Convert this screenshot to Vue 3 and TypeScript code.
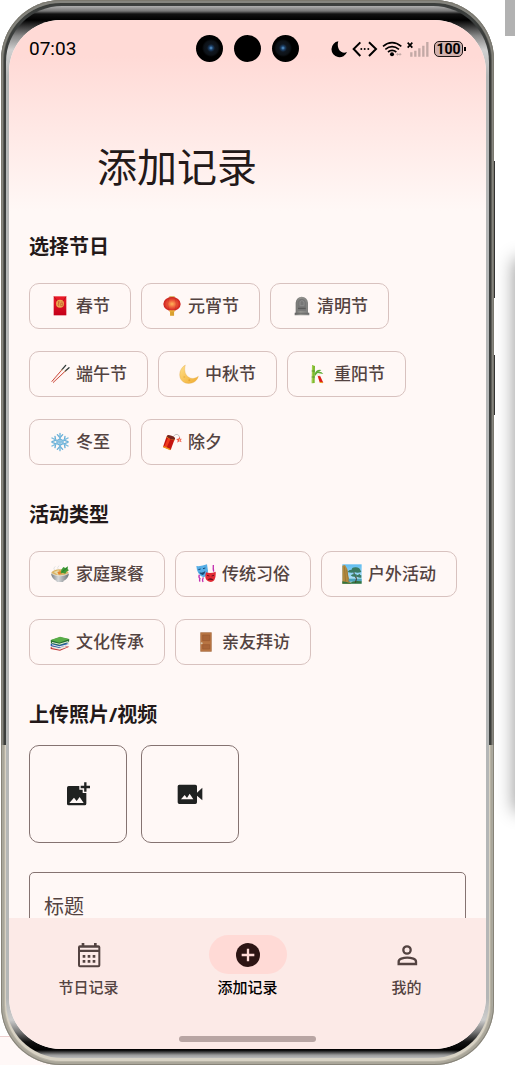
<script setup lang="ts">
import { ref } from 'vue'

interface Option {
  label: string
  icon: string
}

interface Tab {
  label: string
  icon: 'calendar' | 'add' | 'person'
}

const festivals: Option[] = [
  { label: '春节', icon: 'envelope' },
  { label: '元宵节', icon: 'lantern' },
  { label: '清明节', icon: 'stone' },
  { label: '端午节', icon: 'chopsticks' },
  { label: '中秋节', icon: 'crescent' },
  { label: '重阳节', icon: 'bamboo' },
  { label: '冬至', icon: 'snow' },
  { label: '除夕', icon: 'cracker' },
]

const activities: Option[] = [
  { label: '家庭聚餐', icon: 'bowl' },
  { label: '传统习俗', icon: 'masks' },
  { label: '户外活动', icon: 'park' },
  { label: '文化传承', icon: 'books' },
  { label: '亲友拜访', icon: 'door' },
]

const tabs: Tab[] = [
  { label: '节日记录', icon: 'calendar' },
  { label: '添加记录', icon: 'add' },
  { label: '我的', icon: 'person' },
]

const festival = ref('')
const activity = ref('')
const title = ref('')
const current = ref<Tab['icon']>('add')
</script>

<template>
  <div class="stage">
    <svg class="defs" aria-hidden="true">
      <defs>
        <radialGradient id="g-lantern"><stop offset="0" stop-color="#ffb458" /><stop offset=".5" stop-color="#ee5a3a" /><stop offset="1" stop-color="#cc1c1c" /></radialGradient>
        <linearGradient id="g-red" x2="0" y2="1"><stop offset="0" stop-color="#ec1c28" /><stop offset="1" stop-color="#c4001a" /></linearGradient>
        <linearGradient id="g-moon" x2="1" y2="1"><stop offset="0" stop-color="#ffe08a" /><stop offset="1" stop-color="#f0ab2e" /></linearGradient>
        <linearGradient id="g-stone" x2="1"><stop offset="0" stop-color="#6d6d6d" /><stop offset=".4" stop-color="#94948f" /><stop offset="1" stop-color="#7c7c7c" /></linearGradient>
        <linearGradient id="g-bowl" x2="1"><stop offset="0" stop-color="#777c80" /><stop offset=".4" stop-color="#d5d8da" /><stop offset="1" stop-color="#6e7376" /></linearGradient>
        <linearGradient id="g-sky" x2="0" y2="1"><stop offset="0" stop-color="#5fbcf0" /><stop offset="1" stop-color="#c8ecf8" /></linearGradient>
      </defs>
      <symbol id="envelope" viewBox="0 0 60 60">
        <path fill="url(#g-red)" d="M11 1h38v57H11z" />
        <path fill="none" stroke="#a80a16" stroke-width="2" d="M12 2l10 14q8 10 17 0L48 2" />
        <circle cx="30" cy="23" r="12" fill="#e8a94e" />
        <path fill="none" stroke="#c4542c" stroke-width="2" d="M24 18h5M26 16v14M32 18h6M32 22h6v7h-6zM23 25l3-3" />
      </symbol>
      <symbol id="lantern" viewBox="0 0 60 60">
        <path fill="#c89a34" d="M22 1h16v7H22z" />
        <ellipse cx="30" cy="24" rx="26" ry="21" fill="url(#g-lantern)" />
        <path fill="none" stroke="#b82a20" stroke-width="1" d="M21 5q-8 19 0 38M39 5q8 19 0 38" />
        <path fill="#e9b13a" d="M22 43h16v4h-2v12H24V47h-2z" />
        <path stroke="#a97219" d="M27 47v12M31 47v12M35 47v12" />
      </symbol>
      <symbol id="stone" viewBox="0 0 60 60">
        <path fill="url(#g-stone)" d="M14 50V20q2-17 18-18 17 1 19 18v30h4v8H11v-8z" />
        <path fill="#767676" d="M20 18q3-10 13-10 10 1 12 12v24H20z" />
        <path fill="none" stroke="#8c8c8c" stroke-width="3" d="M27 17q5-7 12 0v12H27z" />
        <path stroke="#555" stroke-width="3" d="M21 37h23" /><path stroke="#5d5d5d" stroke-width="2" d="M12 52h42" />
      </symbol>
      <symbol id="chopsticks" viewBox="0 0 60 60">
        <path stroke="#c94538" stroke-width="3" d="M5 53L36 17M9 56L46 21" />
        <path stroke="#eda89c" stroke-width="1" d="M7 53L37 18M10 57L47 22" />
        <path stroke="#333c3a" stroke-width="4" stroke-linecap="round" d="M36 17L47 4M46 21L57 11" />
        <path stroke="#d8a36a" stroke-width="3" d="M34 20l3-4M43 24l4-4" />
      </symbol>
      <symbol id="crescent" viewBox="0 0 60 60">
        <path fill="url(#g-moon)" stroke="#dda442" stroke-width="1" d="M19 3C-3 15-4 49 19 57c15 4 34-1 39-20C47 46 31 46 22 33 16 24 16 11 19 3z" />
        <circle cx="16" cy="39" r="3" fill="#edb64b" /><circle cx="31" cy="49" r="3" fill="#e6a534" />
      </symbol>
      <symbol id="bamboo" viewBox="0 0 60 60">
        <path fill="#79b82c" d="M12 3l9 3-1 51-9 1z" />
        <path stroke="#c3dc62" stroke-width="2" d="M14 5v51" /><path stroke="#408226" stroke-width="2" d="M11 21h10M11 39h10" />
        <path fill="#5eae35" d="M20 29q5-14 20-11-4 5-11 6 11-3 17 6-9-1-17-3l-8 9z" />
        <path fill="#dc1d16" d="M28 32l8 3 10 21-11-1z" /><path fill="#f5eee0" d="M27 29l9 3-1 5-9-2z" />
        <path stroke="#e8a81e" stroke-width="3" d="M35 55l9 1" />
      </symbol>
      <symbol id="snow" viewBox="0 0 60 60">
        <g fill="none" stroke="#67afd7" stroke-width="4" stroke-linecap="round">
          <path d="M30 4v52M6 18l48 24M54 18L6 42" />
          <path d="M22 8l8 9 8-9M22 52l8-9 8 9M6 29l11-4-2-12M54 31l-11 4 2 12M45 13l-2 12 11 4M15 47l2-12-11-4" />
          <path d="M30 21l9 5v9l-9 5-9-5v-9z" />
        </g>
        <path stroke="#b2ddf2" stroke-width="1" d="M30 4v52M6 18l48 24M54 18L6 42" />
      </symbol>
      <symbol id="cracker" viewBox="0 0 60 60">
        <path fill="none" stroke="#a8a4a1" stroke-width="2" d="M32 16Q42 2 50 10q4 4 3 12" />
        <path fill="#c51410" d="M14 13l24 9-12 32L3 45z" />
        <path fill="#ef3b1c" d="M19 15l8 3L13 49l-7-3z" />
        <path fill="none" stroke="#ef9a1b" stroke-width="4" d="M4 44l21 9M14 15l24 9" />
        <ellipse cx="27" cy="16" rx="13" ry="5" fill="#75231b" transform="rotate(22 27 16)" />
        <path fill="#f15545" d="M53 15l2 6 5-1-4 5 3 6-7-3-6 4 1-7-5-4 7-1z" /><circle cx="53" cy="24" r="2" fill="#fff0b0" />
      </symbol>
      <symbol id="bowl" viewBox="0 0 60 60">
        <path fill="none" stroke="#e2e4e3" stroke-width="3" d="M14 19q-6-7 2-12M25 17q-5-6 2-12" />
        <ellipse cx="30" cy="27" rx="26" ry="11" fill="#dab366" />
        <path fill="#e6dcae" d="M11 24l14-5 9 8-10 6z" /><path fill="#e7822b" d="M22 24l10-3 4 7-10 4z" />
        <path fill="#3f9a35" d="M34 17l6-8 6 3 8-5-1 8 4 4-8 4-3 6-7-2-7 1z" /><path stroke="#1e6827" stroke-width="2" d="M37 23l14-11" />
        <path fill="url(#g-bowl)" d="M3 28q27 15 54 0-2 17-17 23v3H20v-3Q5 45 3 28z" />
        <path fill="none" stroke="#eceeef" stroke-width="2" d="M3 28q27 15 54 0" />
      </symbol>
      <symbol id="masks" viewBox="0 0 60 60">
        <path fill="none" stroke="#c22fb0" stroke-width="4" d="M10 32q-3 8 2 12-3 4 0 9M52 3q-1 11 1 20M22 40q-4 7-1 14" />
        <path fill="#57aee6" d="M1 6q15 2 32-5l3 20q0 13-13 19Q3 34 1 6z" />
        <path stroke="#174a75" stroke-width="3" fill="none" d="M7 17l7-2M21 14l7-2" />
        <path fill="#174a75" d="M10 25q9 3 18-4-2 11-8 12-7 0-10-8z" />
        <path fill="#e22a35" d="M30 25q14 5 29-2 2 28-14 31-15-1-17-14 0-8 2-15z" />
        <path stroke="#6b1020" stroke-width="3" fill="none" d="M33 34l7 2M47 36l7-2" />
        <path fill="#6b1020" d="M34 48q7-9 17-2l1 3q-9-3-18-1z" />
      </symbol>
      <symbol id="park" viewBox="0 0 60 60">
        <path fill="url(#g-sky)" d="M1 1h58v58H1z" />
        <path fill="#b58a3e" d="M1 5l8-2 7 12 3 23 8 21H1z" /><path stroke="#9a7836" stroke-width="3" d="M7 8l4 45M14 17l6 37" />
        <path fill="#4da3bb" d="M20 44h39v9H20z" />
        <path fill="#347440" d="M24 57q10-9 35-5v7H1v-7q14 2 23 5z" />
        <path fill="none" stroke="#473b29" stroke-width="3" d="M40 56q8-12-2-22-5-6 1-18M42 40l11-9" />
        <path fill="#3a7a62" d="M17 24q4-8 12-7 1-8 13-7 10 0 13 8l3 6q-13 4-20 0-8 5-21 0zM26 34q11-7 19-2l-3 6q-10 2-16-4zM42 36q8-7 16-2v7q-9 2-16-5z" />
      </symbol>
      <symbol id="books" viewBox="0 0 60 60">
        <path fill="#bf3033" d="M2 45l30-7 26 6-28 12L2 51z" /><path fill="#eee7df" d="M5 45l27-5 22 4-25 9L5 48z" />
        <path fill="#245ca5" d="M2 35l29-8 26 9-29 12L2 42z" /><path fill="#eeeeea" d="M6 37l22 6 28-7v3l-27 7-23-6z" />
        <path fill="#256f2d" d="M2 25l28-9 28 6-1 8-29 10L3 34z" /><path fill="#e5eee4" d="M6 30l22 5 27-8v3l-26 8-23-5z" />
        <path fill="#59ad48" d="M2 24l28-10 28 7-30 11z" />
      </symbol>
      <symbol id="door" viewBox="0 0 60 60">
        <path fill="#a26335" d="M13 1h34v58H13z" /><path fill="#b87543" d="M15 3h30v54H15z" />
        <path fill="#a96538" stroke="#9a5b31" stroke-width="2" d="M20 9h21v17H20zM20 38h21v13H20z" />
        <circle cx="17" cy="34" r="3" fill="#d9c8ad" />
      </symbol>
    </svg>

    <div class="backdrop-block"></div>
    <div class="backdrop-shade"></div>
    <div class="backdrop-card"></div>

    <div class="phone">
      <i class="key key-volume"></i>
      <i class="key key-power"></i>
      <div class="bezel">
        <div class="screen">
          <header class="top">
            <div class="status">
              <time>07:03</time>
              <div class="cameras">
                <i class="lens glass"></i><i class="lens"></i><i class="lens glass glass-right"></i>
              </div>
              <div class="indicators">
                <svg class="signals" viewBox="225 118 306 54" aria-hidden="true">
                  <path d="M250 122a24 24 0 1 0 26 32c-17 9-33-10-26-32z" />
                  <path fill="none" stroke="#000" stroke-width="6" d="M316 125l-20 20 20 21M342 125l21 20-21 21" />
                  <circle cx="319" cy="145" r="3" /><circle cx="329" cy="145" r="3" /><circle cx="340" cy="145" r="3" />
                  <path fill="none" stroke="#000" stroke-width="5" d="M384 137q27-22 55 0M391 146q20-16 41 0M399 154q12-10 25 0" />
                  <circle cx="411" cy="161" r="6" />
                  <path fill="#c3a9a6" d="M423 161l6-5v3h5v-3l6 5-6 5v-3h-5v3z" />
                  <path fill="none" stroke="#000" stroke-width="5" d="M458 126l14 15M472 126l-14 15" />
                  <path stroke="#c3a9a6" stroke-width="7" d="M469 155v13M481 150v18M493 143v25M505 135v33M517 124v44" />
                </svg>
                <span class="battery">100</span>
              </div>
            </div>
            <h1>添加记录</h1>
          </header>

          <main>
            <section>
              <h2>选择节日</h2>
              <div class="chips">
                <button v-for="item in festivals" :key="item.label" type="button" class="chip" :aria-pressed="festival === item.label" @click="festival = item.label">
                  <svg class="emoji" aria-hidden="true"><use :href="'#' + item.icon" /></svg>
                  {{ item.label }}
                </button>
              </div>
            </section>

            <section>
              <h2>活动类型</h2>
              <div class="chips">
                <button v-for="item in activities" :key="item.label" type="button" class="chip" :aria-pressed="activity === item.label" @click="activity = item.label">
                  <svg class="emoji" aria-hidden="true"><use :href="'#' + item.icon" /></svg>
                  {{ item.label }}
                </button>
              </div>
            </section>

            <section class="uploads">
              <h2>上传照片/视频</h2>
              <div class="tiles">
                <button type="button" class="tile" aria-label="添加照片">
                  <svg class="glyph" viewBox="190 269 84 84" aria-hidden="true">
                    <path fill="#202221" fill-rule="evenodd" d="M204 287h32v11h10v10h11v32q0 5-5 5h-48q-5 0-5-5v-48q0-5 5-5zM206 338h43l-12-18-9 12-8-10z" />
                    <path stroke="#202221" stroke-width="7" d="M240 290h28M254 276v28" />
                  </svg>
                </button>
                <button type="button" class="tile" aria-label="添加视频">
                  <svg class="glyph" viewBox="527 269 84 84" aria-hidden="true">
                    <path fill="#202221" fill-rule="evenodd" d="M537 283h48q5 0 5 5v19l16-15v38l-16-14v20q0 5-5 5h-48q-5 0-5-5v-48q0-5 5-5zM542 327h37l-11-17-8 13-7-9z" />
                  </svg>
                </button>
              </div>
            </section>

            <label class="field">
              <input v-model="title" type="text" placeholder="标题" aria-label="标题" />
            </label>
          </main>

          <nav>
            <div class="tabs">
              <button v-for="tab in tabs" :key="tab.icon" type="button" class="tab" :class="{ active: current === tab.icon }" @click="current = tab.icon">
                <span class="pill">
                  <svg v-if="tab.icon === 'calendar'" class="glyph" viewBox="223 105 84 84" aria-hidden="true">
                    <path fill="currentColor" fill-rule="evenodd" d="M243 111h8v7h29v-7h8v7h5q6 0 6 6v54q0 6-6 6h-55q-6 0-6-6v-54q0-6 6-6h5zM238 125v6h55v-6zM238 138v40h55v-40z" />
                    <path stroke="currentColor" stroke-width="8" d="M246 151h8M261 151h8M276 151h8M246 166h8M261 166h8M276 166h8" />
                  </svg>
                  <svg v-else-if="tab.icon === 'add'" class="glyph" viewBox="700 105 84 84" aria-hidden="true">
                    <circle cx="742" cy="147" r="36" fill="currentColor" />
                    <path stroke="#ffdad6" stroke-width="7" d="M723 147h38M742 128v38" />
                  </svg>
                  <svg v-else class="glyph" viewBox="412 105 84 84" aria-hidden="true">
                    <g fill="none" stroke="currentColor" stroke-width="7">
                      <circle cx="454" cy="132" r="11" />
                      <path d="M429 174v-7q0-6 8-9 17-6 36 0 8 3 8 9v7z" />
                    </g>
                  </svg>
                </span>
                <span class="name">{{ tab.label }}</span>
              </button>
            </div>
            <i class="home"></i>
          </nav>
        </div>
      </div>
    </div>
  </div>
</template>

<style>
body {
  background: #fff;
}
</style>

<style scoped>
.stage {
  position: relative;
  box-sizing: border-box;
  height: 100vh;
  min-height: 640px;
  padding: 0 21px 0 1px;
  overflow: hidden;
  font-family: "Noto Sans", "Noto Sans CJK SC", sans-serif;
  color: #231919;
}

.defs {
  position: absolute;
  width: 0;
  height: 0;
}

.backdrop-block {
  position: absolute;
  top: 0;
  right: 0;
  width: 10px;
  height: 36px;
  background: #b2b2b2;
}

.backdrop-shade {
  position: absolute;
  top: 260px;
  right: -20px;
  width: 20px;
  height: 550px;
  box-shadow: 0 0 18px 1px #999;
}

.backdrop-card {
  position: absolute;
  bottom: 0;
  left: 0;
  width: 100px;
  height: 28px;
  border-top: 1px solid #eccfcf;
  background: #fff8f7;
}

.phone {
  position: relative;
  box-sizing: border-box;
  height: 100%;
  padding: 6px 5px 7px;
  border-radius: 60px;
  background: linear-gradient(to bottom, #3c3f3e 70%, #d8d2c4 70%);
  box-shadow: inset 0 0 0 1px rgba(120, 116, 104, 0.7), inset 0 1px 0 2px rgba(170, 172, 165, 0.5), inset 0 0 0 3px rgba(150, 146, 135, 0.4), inset 0 0 0 4px rgba(60, 58, 50, 0.2);
}

.key {
  position: absolute;
  right: -1px;
  width: 1px;
  background: #333;
}

.key-volume {
  top: 161px;
  height: 137px;
}

.key-power {
  top: 355px;
  height: 60px;
}

.bezel {
  box-sizing: border-box;
  height: 100%;
  padding: 14px 3px 9px;
  border-radius: 56px;
  background: linear-gradient(to bottom, #b0b0b0 0, #777 5px, #111 8px, #000 14px, #333 20px, #888 30px, #d0d0d0 44px, #b4b6b6 70px, #b4b6b6 calc(100% - 60px), #ccc calc(100% - 38px), #777 calc(100% - 26px), #111 calc(100% - 16px), #000 calc(100% - 8px), #999 calc(100% - 3px), #bbb 100%);
}

.screen {
  display: flex;
  flex-direction: column;
  height: 100%;
  overflow: hidden;
  border-radius: 52px;
  background: #fff8f6;
}

.top {
  flex: none;
  background: linear-gradient(to bottom, #ffdad6 0, #ffdad6 36px, #fff8f6 100%);
}

.status {
  display: grid;
  grid-template-columns: 1fr auto 1fr;
  align-items: center;
  height: 57px;
  padding: 0 20px;
  color: #000;
}

time {
  font: 400 19px/24px Roboto, sans-serif;
}

.cameras {
  display: flex;
  gap: 11px;
}

.lens {
  width: 27px;
  height: 27px;
  border-radius: 50%;
  background: #000;
}

.glass {
  background: radial-gradient(circle at 15px 13px, #5fa0d8 0, #1c4068 2px, #101720 4px, #0d1217 7px, #000 9px);
}

.glass-right {
  background: radial-gradient(circle at 11px 13px, #5fa0d8 0, #1c4068 2px, #101720 4px, #0d1217 7px, #000 9px);
}

.indicators {
  display: flex;
  justify-content: flex-end;
  align-items: center;
  gap: 2px;
}

.signals {
  width: 102px;
  height: 18px;
}

.battery {
  position: relative;
  box-sizing: border-box;
  width: 29px;
  height: 16px;
  margin-right: 3px;
  border: 1px solid #1e1616;
  border-radius: 5px;
  background: #d2b1ad;
  font: 700 14px/14px Roboto, sans-serif;
  text-align: center;
}

.battery::after {
  content: "";
  position: absolute;
  top: 5px;
  right: -4px;
  width: 2px;
  height: 4px;
  background: #000;
}

h1 {
  margin: 0;
  padding: 62px 88px 16px;
  font-size: 40px;
  font-weight: 400;
  line-height: 56px;
}

main {
  flex: 1;
  min-height: 0;
  overflow: hidden;
  padding: 22px 20px 0;
}

section {
  margin-bottom: 36px;
}

h2 {
  margin: 0 0 22px;
  font-size: 20px;
  font-weight: 700;
  line-height: 28px;
}

.chips {
  display: flex;
  flex-wrap: wrap;
  gap: 22px 10px;
}

.chip {
  display: flex;
  align-items: center;
  gap: 6px;
  box-sizing: border-box;
  height: 46px;
  padding: 0 20px;
  border: 1px solid #d8c2bf;
  border-radius: 10px;
  background: transparent;
  color: #534341;
  font-family: inherit;
  font-size: 17px;
  font-weight: 500;
  line-height: 24px;
}

.emoji {
  width: 20px;
  height: 20px;
}

.uploads {
  margin-bottom: 29px;
}

.uploads h2 {
  margin-bottom: 16px;
}

.tiles {
  display: flex;
  gap: 14px;
}

.tile {
  display: grid;
  place-items: center;
  width: 98px;
  height: 98px;
  padding: 0;
  border: 1px solid #857371;
  border-radius: 10px;
  background: transparent;
}

.glyph {
  display: block;
  width: 28px;
  height: 28px;
}

.field {
  display: block;
}

.field input {
  box-sizing: border-box;
  width: 100%;
  height: 68px;
  padding: 0 14px;
  border: 1px solid #857371;
  border-radius: 5px;
  background: transparent;
  color: #231919;
  font-family: inherit;
  font-size: 20px;
}

.field input::placeholder {
  color: #534341;
  opacity: 1;
}

nav {
  flex: none;
  padding: 17px 0 7px;
  background: #fceae7;
}

.tabs {
  display: grid;
  grid-template-columns: repeat(3, 1fr);
  padding-bottom: 38px;
}

.tab {
  display: flex;
  flex-direction: column;
  align-items: center;
  gap: 2px;
  padding: 0;
  border: 0;
  background: transparent;
  color: #534341;
  font-family: inherit;
  font-size: 15px;
  font-weight: 500;
  line-height: 22px;
}

.pill {
  display: grid;
  place-items: center;
  width: 78px;
  height: 39px;
  border-radius: 20px;
}

.active {
  color: #231919;
}

.active .name {
  color: #000;
}

.active .pill {
  background: #ffdad6;
  color: #2d1514;
}

.home {
  display: block;
  width: 137px;
  height: 6px;
  margin: 0 auto;
  border-radius: 3px;
  background: #b8a5a3;
}
</style>
